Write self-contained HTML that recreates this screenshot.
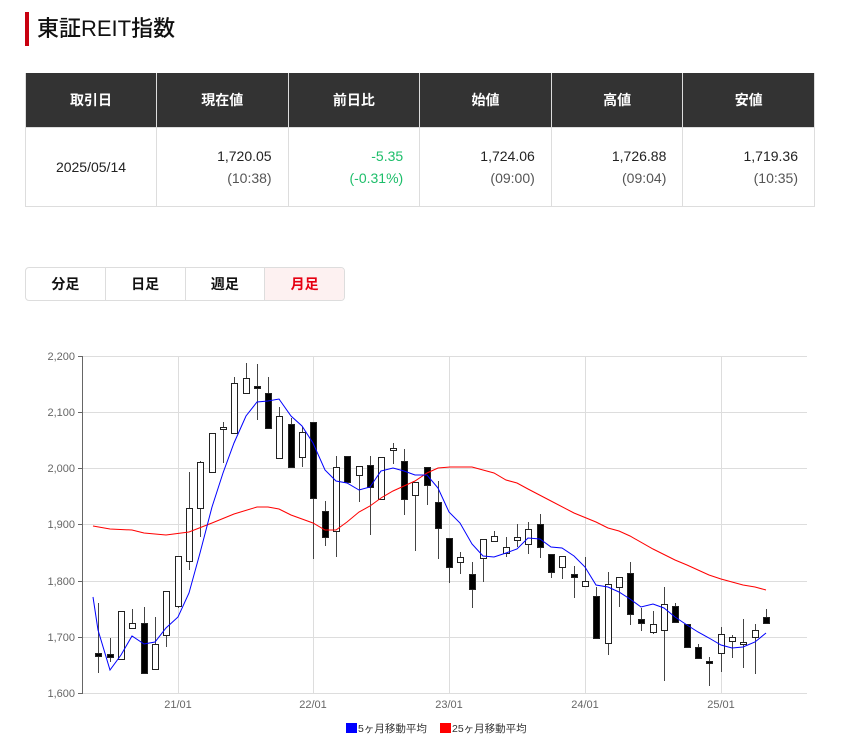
<!DOCTYPE html>
<html><head><meta charset="utf-8"><style>
*{margin:0;padding:0;box-sizing:border-box}
body{width:855px;height:745px;background:#fff;font-family:"Liberation Sans","Noto Sans CJK JP",sans-serif;color:#222;position:relative;overflow:hidden}
.ttl{position:absolute;left:25px;top:12px;height:34px;border-left:4px solid #c8000f;padding-left:8px;font-size:22px;line-height:34px;font-weight:500;color:#111}
table{position:absolute;left:25px;top:73px;width:790px;border-collapse:collapse;table-layout:fixed}
th{background:#333;color:#fff;height:54px;font-size:14px;font-weight:bold;border:1px solid #ddd;border-top:none}
td{height:79px;border:1px solid #ddd;font-size:14px;text-align:right;padding-right:16px;line-height:22px;color:#222}
td.c{text-align:center;padding:0}
.g{color:#1dbe6a}.s{color:#555}
.tabs{position:absolute;left:25px;top:267px;width:320px;height:34px;border:1px solid #ddd;border-radius:4px;display:flex;overflow:hidden}
.tabs div{flex:1;text-align:center;line-height:32px;font-size:14px;font-weight:bold;border-right:1px solid #ddd;color:#111}
.tabs div:last-child{border-right:none;background:#fdf1f1;color:#e60012}
</style></head><body>
<div class="ttl">東証REIT指数</div>
<table><tr><th style="width:131px">取引日</th><th>現在値</th><th>前日比</th><th>始値</th><th>高値</th><th>安値</th></tr>
<tr><td class="c">2025/05/14</td><td>1,720.05<br><span class="s">(10:38)</span></td><td class="g">-5.35<br>(-0.31%)</td><td>1,724.06<br><span class="s">(09:00)</span></td><td>1,726.88<br><span class="s">(09:04)</span></td><td>1,719.36<br><span class="s">(10:35)</span></td></tr></table>
<div class="tabs"><div>分足</div><div>日足</div><div>週足</div><div>月足</div></div>
<svg width="855" height="745" style="position:absolute;left:0;top:0" font-family="Liberation Sans, Noto Sans CJK JP, sans-serif">
<g stroke="#ddd" stroke-width="1">
<line x1="83" x2="807" y1="356.5" y2="356.5"/><line x1="83" x2="807" y1="412.5" y2="412.5"/><line x1="83" x2="807" y1="468.5" y2="468.5"/><line x1="83" x2="807" y1="524.5" y2="524.5"/><line x1="83" x2="807" y1="581.5" y2="581.5"/><line x1="83" x2="807" y1="637.5" y2="637.5"/><line x1="83" x2="807" y1="693.5" y2="693.5"/>
<line x1="178.5" x2="178.5" y1="356" y2="693"/><line x1="313.5" x2="313.5" y1="356" y2="693"/><line x1="449.5" x2="449.5" y1="356" y2="693"/><line x1="585.5" x2="585.5" y1="356" y2="693"/><line x1="721.5" x2="721.5" y1="356" y2="693"/>
</g>
<g stroke="#666"><line x1="82.5" x2="82.5" y1="356" y2="694"/>
<line x1="78" x2="83" y1="356.5" y2="356.5"/><line x1="78" x2="83" y1="412.5" y2="412.5"/><line x1="78" x2="83" y1="468.5" y2="468.5"/><line x1="78" x2="83" y1="524.5" y2="524.5"/><line x1="78" x2="83" y1="581.5" y2="581.5"/><line x1="78" x2="83" y1="637.5" y2="637.5"/><line x1="78" x2="83" y1="693.5" y2="693.5"/></g>
<g fill="#666" font-size="11" text-anchor="end">
<text x="75" y="360">2,200</text><text x="75" y="416">2,100</text><text x="75" y="472">2,000</text><text x="75" y="528">1,900</text><text x="75" y="585">1,800</text><text x="75" y="641">1,700</text><text x="75" y="697">1,600</text></g>
<g fill="#666" font-size="11" text-anchor="middle">
<text x="178" y="708">21/01</text><text x="313" y="708">22/01</text><text x="449" y="708">23/01</text><text x="585" y="708">24/01</text><text x="721" y="708">25/01</text></g>
<g stroke="#444" stroke-width="1">
<line x1="98.5" x2="98.5" y1="603" y2="673"/><line x1="110.5" x2="110.5" y1="638" y2="662"/><line x1="121.5" x2="121.5" y1="611" y2="659"/><line x1="132.5" x2="132.5" y1="609" y2="628"/><line x1="144.5" x2="144.5" y1="607" y2="673"/><line x1="155.5" x2="155.5" y1="617" y2="669"/><line x1="166.5" x2="166.5" y1="591" y2="647"/><line x1="178.5" x2="178.5" y1="556" y2="608"/><line x1="189.5" x2="189.5" y1="472" y2="570"/><line x1="200.5" x2="200.5" y1="461" y2="537"/><line x1="212.5" x2="212.5" y1="433" y2="472"/><line x1="223.5" x2="223.5" y1="422" y2="463"/><line x1="234.5" x2="234.5" y1="377" y2="433"/><line x1="246.5" x2="246.5" y1="363" y2="393"/><line x1="257.5" x2="257.5" y1="364" y2="420"/><line x1="268.5" x2="268.5" y1="377" y2="428"/><line x1="279.5" x2="279.5" y1="407" y2="458"/><line x1="291.5" x2="291.5" y1="418" y2="467"/><line x1="302.5" x2="302.5" y1="427" y2="467"/><line x1="313.5" x2="313.5" y1="422" y2="559"/><line x1="325.5" x2="325.5" y1="501" y2="546"/><line x1="336.5" x2="336.5" y1="456" y2="557"/><line x1="347.5" x2="347.5" y1="456" y2="482"/><line x1="359.5" x2="359.5" y1="466" y2="502"/><line x1="370.5" x2="370.5" y1="456" y2="535"/><line x1="381.5" x2="381.5" y1="457" y2="499"/><line x1="393.5" x2="393.5" y1="443" y2="464"/><line x1="404.5" x2="404.5" y1="449" y2="515"/><line x1="415.5" x2="415.5" y1="482" y2="551"/><line x1="427.5" x2="427.5" y1="467" y2="505"/><line x1="438.5" x2="438.5" y1="481" y2="559"/><line x1="449.5" x2="449.5" y1="538" y2="583"/><line x1="460.5" x2="460.5" y1="552" y2="574"/><line x1="472.5" x2="472.5" y1="562" y2="608"/><line x1="483.5" x2="483.5" y1="539" y2="582"/><line x1="494.5" x2="494.5" y1="531" y2="541"/><line x1="506.5" x2="506.5" y1="537" y2="557"/><line x1="517.5" x2="517.5" y1="524" y2="547"/><line x1="528.5" x2="528.5" y1="522" y2="554"/><line x1="540.5" x2="540.5" y1="514" y2="558"/><line x1="551.5" x2="551.5" y1="554" y2="578"/><line x1="562.5" x2="562.5" y1="556" y2="579"/><line x1="574.5" x2="574.5" y1="566" y2="598"/><line x1="585.5" x2="585.5" y1="557" y2="586"/><line x1="596.5" x2="596.5" y1="587" y2="638"/><line x1="608.5" x2="608.5" y1="572" y2="655"/><line x1="619.5" x2="619.5" y1="577" y2="607"/><line x1="630.5" x2="630.5" y1="562" y2="625"/><line x1="641.5" x2="641.5" y1="608" y2="631"/><line x1="653.5" x2="653.5" y1="611" y2="634"/><line x1="664.5" x2="664.5" y1="587" y2="681"/><line x1="675.5" x2="675.5" y1="603" y2="622"/><line x1="687.5" x2="687.5" y1="624" y2="647"/><line x1="698.5" x2="698.5" y1="644" y2="659"/><line x1="709.5" x2="709.5" y1="657" y2="686"/><line x1="721.5" x2="721.5" y1="627" y2="672"/><line x1="732.5" x2="732.5" y1="635" y2="658"/><line x1="743.5" x2="743.5" y1="619" y2="668"/><line x1="755.5" x2="755.5" y1="624" y2="674"/><line x1="766.5" x2="766.5" y1="609" y2="623"/>
</g>
<g stroke="#222" stroke-width="1">
<g fill="#000">
<rect x="95.5" y="653.5" width="6" height="3"/><rect x="107.5" y="654.5" width="6" height="3"/><rect x="141.5" y="623.5" width="6" height="50"/><rect x="254.5" y="386.5" width="6" height="2"/><rect x="265.5" y="393.5" width="6" height="35"/><rect x="288.5" y="424.5" width="6" height="43"/><rect x="310.5" y="422.5" width="6" height="76"/><rect x="322.5" y="511.5" width="6" height="26"/><rect x="344.5" y="456.5" width="6" height="26"/><rect x="367.5" y="465.5" width="6" height="22"/><rect x="401.5" y="461.5" width="6" height="38"/><rect x="424.5" y="467.5" width="6" height="18"/><rect x="435.5" y="502.5" width="6" height="26"/><rect x="446.5" y="538.5" width="6" height="29"/><rect x="469.5" y="574.5" width="6" height="15"/><rect x="537.5" y="524.5" width="6" height="23"/><rect x="548.5" y="554.5" width="6" height="18"/><rect x="571.5" y="574.5" width="6" height="3"/><rect x="593.5" y="596.5" width="6" height="42"/><rect x="627.5" y="573.5" width="6" height="41"/><rect x="638.5" y="619.5" width="6" height="4"/><rect x="672.5" y="606.5" width="6" height="16"/><rect x="684.5" y="624.5" width="6" height="23"/><rect x="695.5" y="647.5" width="6" height="11"/><rect x="706.5" y="661.5" width="6" height="2"/><rect x="763.5" y="617.5" width="6" height="6"/>
</g>
<g fill="#fff">
<rect x="118.5" y="611.5" width="6" height="48"/><rect x="129.5" y="623.5" width="6" height="5"/><rect x="152.5" y="644.5" width="6" height="25"/><rect x="163.5" y="591.5" width="6" height="44"/><rect x="175.5" y="556.5" width="6" height="50"/><rect x="186.5" y="508.5" width="6" height="53"/><rect x="197.5" y="462.5" width="6" height="46"/><rect x="209.5" y="433.5" width="6" height="39"/><rect x="220.5" y="427.5" width="6" height="2"/><rect x="231.5" y="383.5" width="6" height="50"/><rect x="243.5" y="378.5" width="6" height="15"/><rect x="276.5" y="416.5" width="6" height="42"/><rect x="299.5" y="432.5" width="6" height="25"/><rect x="333.5" y="467.5" width="6" height="64"/><rect x="356.5" y="466.5" width="6" height="9"/><rect x="378.5" y="457.5" width="6" height="42"/><rect x="390.5" y="448.5" width="6" height="2"/><rect x="412.5" y="482.5" width="6" height="13"/><rect x="457.5" y="557.5" width="6" height="5"/><rect x="480.5" y="539.5" width="6" height="19"/><rect x="491.5" y="536.5" width="6" height="5"/><rect x="503.5" y="547.5" width="6" height="6"/><rect x="514.5" y="537.5" width="6" height="3"/><rect x="525.5" y="529.5" width="6" height="15"/><rect x="559.5" y="556.5" width="6" height="11"/><rect x="582.5" y="581.5" width="6" height="5"/><rect x="605.5" y="584.5" width="6" height="59"/><rect x="616.5" y="577.5" width="6" height="10"/><rect x="650.5" y="624.5" width="6" height="8"/><rect x="661.5" y="604.5" width="6" height="26"/><rect x="718.5" y="634.5" width="6" height="19"/><rect x="729.5" y="637.5" width="6" height="4"/><rect x="740.5" y="642.5" width="6" height="2"/><rect x="752.5" y="630.5" width="6" height="7"/>
</g></g>
<g fill="none" stroke-width="1">
<polyline stroke="#ff0000" points="93,526 110,529 132,530 144,533 166,535 189,532 212,523 234,514 257,507 268,507 279,509 291,515 313,523 325,530 336,530 347,522 359,512 370,506 381,498 393,491 404,486 415,481 427,473 438,468 450,467 460,467 472,467 483,470 494,473 506,480 517,483 528,489 551,501 574,513 596,522 608,528 619,531 630,536 653,549 675,560 687,565 709,575 721,579 743,585 755,587 766,590"/>
<polyline stroke="#0000ff" points="93,597 98,630 110,670 121,655 132,636 144,644 155,642 166,628 178,617 189,593 200,553 212,507 223,473 234,443 246,416 257,402 268,401 279,399 291,416 302,426 313,443 325,470 336,481 347,483 359,490 370,487 381,471 393,468 404,471 415,475 427,475 438,488 449,512 460,523 472,544 483,556 494,557 506,553 517,549 528,538 540,539 551,547 562,548 574,556 585,567 596,585 608,587 619,592 630,599 641,607 653,604 664,608 675,617 687,625 698,632 709,638 721,645 732,648 743,647 755,642 766,633"/>
</g>
<rect x="346" y="723" width="11" height="10" fill="#0000ff"/><text x="358" y="732" font-size="10.5" fill="#333">5ヶ月移動平均</text>
<rect x="440" y="723" width="11" height="10" fill="#ff0000"/><text x="452" y="732" font-size="10.5" fill="#333">25ヶ月移動平均</text>
</svg>
</body></html>
